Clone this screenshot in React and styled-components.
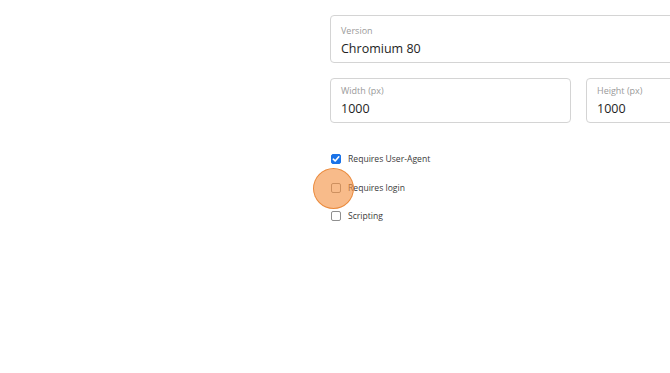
import React, { useState } from 'react';
import styled, { createGlobalStyle } from "styled-components";

const GlobalStyle = createGlobalStyle`
    html, body {
        margin: 0;
        padding: 0;
        background: #fff;
        overflow: hidden;
    }
    body {
        font-family: "Open Sans", "Noto Sans", sans-serif;
        color: #222;
    }
`;

const FIELDS = [
    { label: 'Width (px)', value: '1000' },
    { label: 'Height (px)', value: '1000' },
];

const OPTIONS = [
    { label: 'Requires User-Agent', checked: true },
    { label: 'Requires login', checked: false, highlight: true },
    { label: 'Scripting', checked: false },
];

const Field = ({ label, value }) => (
    <FieldBox>
        <FieldLabel>{label}</FieldLabel>
        <FieldValue>{value}</FieldValue>
    </FieldBox>
);

const App = () => {
    const [options, setOptions] = useState(OPTIONS);

    const toggle = (index) => {
        setOptions(options.map((o, i) => i === index ? { ...o, checked: !o.checked } : o));
    }

    return (
        <>
            <GlobalStyle />
            <Page>
                <Spacer />
                <Form>
                    <VersionBox>
                        <FieldLabel>Version</FieldLabel>
                        <FieldValue>Chromium 80</FieldValue>
                    </VersionBox>
                    <SizeRow>
                        {FIELDS.map(f => <Field key={f.label} {...f} />)}
                    </SizeRow>
                    <Options>
                        {options.map((o, i) => (
                            <OptionRow key={o.label} onClick={() => toggle(i)}>
                                <Box checked={o.checked}>
                                    {o.checked && (
                                        <svg width="8" height="8" viewBox="0 0 8 8">
                                            <path d="M1.3 4.2 L3.2 6 L6.8 1.8" fill="none" stroke="#fff" strokeWidth="1.6" strokeLinecap="round" strokeLinejoin="round" />
                                        </svg>
                                    )}
                                </Box>
                                <OptionLabel>{o.label}</OptionLabel>
                                {o.highlight && <Pointer />}
                            </OptionRow>
                        ))}
                    </Options>
                </Form>
            </Page>
        </>
    )
}

export default App;

const Page = styled.div`
    width: 670px;
    height: 373px;
    display: flex;
    overflow: hidden;
`;

const Spacer = styled.div`
    flex: 0 0 330px;
`;

const Form = styled.div`
    flex: 0 0 500px;
    padding-top: 15px;
    display: flex;
    flex-direction: column;
`;

const FieldBox = styled.div`
    box-sizing: border-box;
    height: 45px;
    border: 1px solid #d4d4d4;
    border-radius: 4px;
    padding: 6px 10px 0;
    display: flex;
    flex-direction: column;
`;

const VersionBox = styled(FieldBox)`
    height: 48px;
    padding-top: 9px;
`;

const FieldLabel = styled.span`
    font-size: 9px;
    line-height: 12px;
    color: #9a9a9a;
`;

const FieldValue = styled.span`
    font-size: 12.5px;
    line-height: 19px;
    margin-top: 2px;
    color: #1e1e1e;
`;

const SizeRow = styled.div`
    margin-top: 15px;
    display: grid;
    grid-template-columns: 241px 241px;
    gap: 15px;
`;

const Options = styled.div`
    margin-top: 30px;
    display: flex;
    flex-direction: column;
    gap: 16.5px;
`;

const OptionRow = styled.label`
    position: relative;
    display: flex;
    align-items: center;
    height: 12px;
    cursor: pointer;
`;

const Box = styled.span`
    box-sizing: border-box;
    width: 10px;
    height: 10px;
    margin-left: 1px;
    border-radius: 2px;
    border: 1px solid ${props => props.checked ? '#1a73e8' : '#8f8f8f'};
    background: ${props => props.checked ? '#1a73e8' : '#fff'};
    display: flex;
    align-items: center;
    justify-content: center;
`;

const OptionLabel = styled.span`
    margin-left: 7px;
    font-size: 8.6px;
    color: #3a3a3a;
`;

const Pointer = styled.span`
    position: absolute;
    left: -17px;
    top: -14px;
    width: 41px;
    height: 41px;
    box-sizing: border-box;
    border-radius: 50%;
    background: rgba(244, 146, 66, 0.62);
    border: 1.5px solid rgba(232, 128, 44, 0.85);
    pointer-events: none;
`;
